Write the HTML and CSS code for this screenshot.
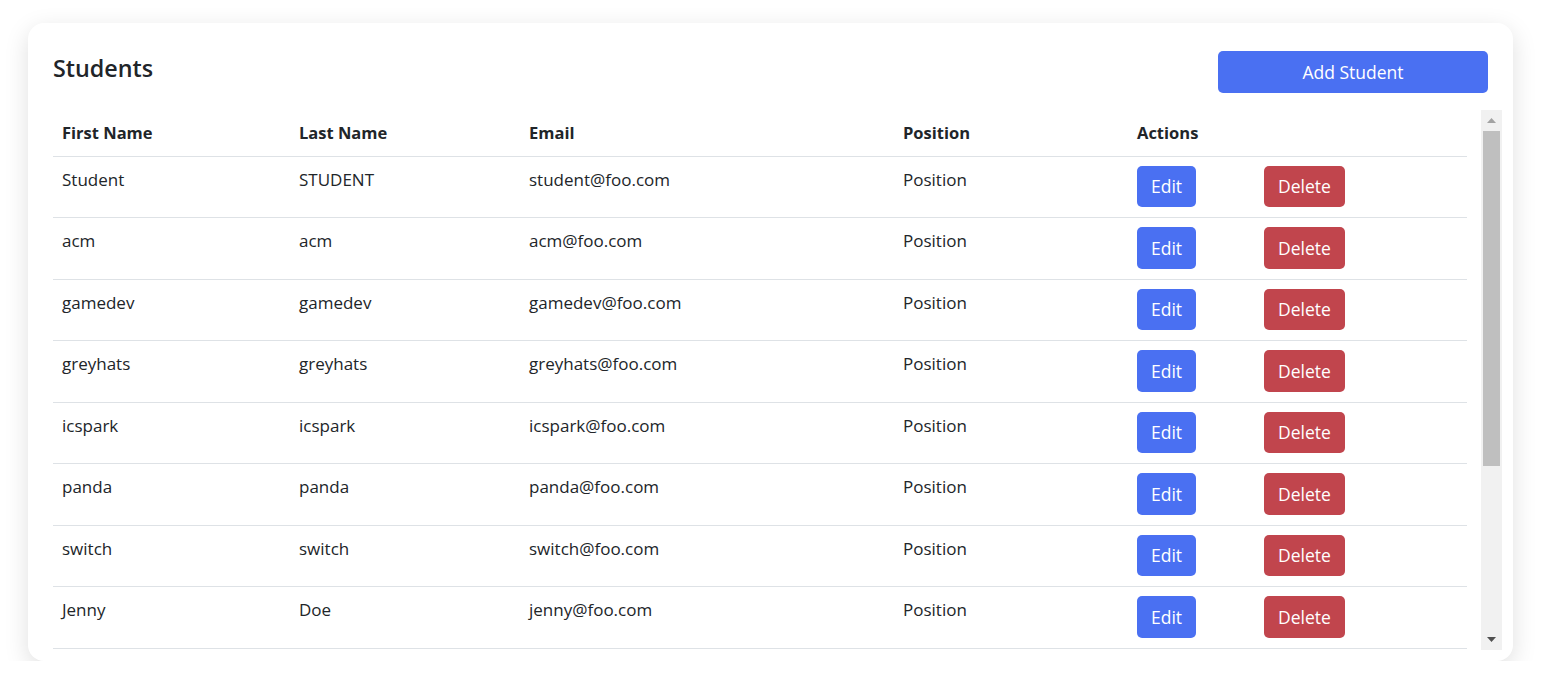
FILE: index.html
```html
<!DOCTYPE html>
<html lang="en">
<head>
<meta charset="utf-8">
<title>Students</title>
<link rel="stylesheet" href="styles.css">
</head>
<body>
<main class="page">
  <section class="card">
    <header class="card-head">
      <h2 class="title">Students</h2>
      <button class="btn btn-primary btn-add">Add Student</button>
    </header>
    <div class="table-wrap">
      <div class="table-scroll">
        <table class="table">
          <colgroup>
            <col class="c-first"><col class="c-last"><col class="c-email"><col class="c-pos"><col class="c-edit"><col class="c-del">
          </colgroup>
          <thead>
            <tr><th>First Name</th><th>Last Name</th><th>Email</th><th>Position</th><th>Actions</th><th class="th-empty"></th></tr>
          </thead>
          <tbody>
            <tr><td>Student</td><td>STUDENT</td><td>student@foo.com</td><td>Position</td><td><button class="btn btn-primary btn-sm">Edit</button></td><td><button class="btn btn-danger btn-sm">Delete</button></td></tr>
            <tr><td>acm</td><td>acm</td><td>acm@foo.com</td><td>Position</td><td><button class="btn btn-primary btn-sm">Edit</button></td><td><button class="btn btn-danger btn-sm">Delete</button></td></tr>
            <tr><td>gamedev</td><td>gamedev</td><td>gamedev@foo.com</td><td>Position</td><td><button class="btn btn-primary btn-sm">Edit</button></td><td><button class="btn btn-danger btn-sm">Delete</button></td></tr>
            <tr><td>greyhats</td><td>greyhats</td><td>greyhats@foo.com</td><td>Position</td><td><button class="btn btn-primary btn-sm">Edit</button></td><td><button class="btn btn-danger btn-sm">Delete</button></td></tr>
            <tr><td>icspark</td><td>icspark</td><td>icspark@foo.com</td><td>Position</td><td><button class="btn btn-primary btn-sm">Edit</button></td><td><button class="btn btn-danger btn-sm">Delete</button></td></tr>
            <tr><td>panda</td><td>panda</td><td>panda@foo.com</td><td>Position</td><td><button class="btn btn-primary btn-sm">Edit</button></td><td><button class="btn btn-danger btn-sm">Delete</button></td></tr>
            <tr><td>switch</td><td>switch</td><td>switch@foo.com</td><td>Position</td><td><button class="btn btn-primary btn-sm">Edit</button></td><td><button class="btn btn-danger btn-sm">Delete</button></td></tr>
            <tr><td>Jenny</td><td>Doe</td><td>jenny@foo.com</td><td>Position</td><td><button class="btn btn-primary btn-sm">Edit</button></td><td><button class="btn btn-danger btn-sm">Delete</button></td></tr>
          </tbody>
        </table>
      </div>
      <div class="scrollbar" aria-hidden="true">
        <div class="sb-btn">
          <svg width="9" height="5" viewBox="0 0 9 5"><path d="M0 5h9L4.5 0z" fill="#a3a3a3"/></svg>
        </div>
        <div class="sb-thumb"></div>
        <div class="sb-space"></div>
        <div class="sb-btn">
          <svg width="9" height="5" viewBox="0 0 9 5"><path d="M0 0h9L4.5 5z" fill="#505050"/></svg>
        </div>
      </div>
    </div>
  </section>
</main>
</body>
</html>
```

FILE: styles.css
```css
* { box-sizing: border-box; }

html, body {
  margin: 0;
  padding: 0;
  background: #ffffff;
}

body {
  font-family: "Open Sans", "Noto Sans", sans-serif;
  font-size: 17px;
  line-height: 1.5;
  color: #212529;
}

.page {
  padding: 23px 32px 0 28px;
}

.card {
  background: #fff;
  border-radius: 16px;
  box-shadow: 0 7px 24px rgba(0, 0, 0, 0.13);
  padding: 28px 25px 11px 25px;
  height: 638px;
  display: flex;
  flex-direction: column;
}

.card-head {
  display: flex;
  justify-content: space-between;
  align-items: flex-start;
  margin-bottom: 17px;
}

.title {
  margin: 0;
  font-size: 23.3px;
  font-weight: 600;
  line-height: 34px;
  color: #212529;
}

.btn {
  font-family: inherit;
  border: none;
  border-radius: 5px;
  color: #fff;
  cursor: pointer;
}

.btn-primary { background: #4a70f2; }
.btn-danger { background: #c1454d; }

.btn-add {
  width: 270px;
  height: 42px;
  font-size: 17.5px;
}

.btn-sm {
  height: 41.5px;
  font-size: 17.5px;
  padding: 0 14px;
}

.table-wrap {
  display: flex;
  height: 540px;
  margin-right: -14px;
}

.table-scroll {
  flex: 1;
  overflow: hidden;
  padding-right: 14px;
}

.scrollbar {
  width: 21px;
  flex: none;
  background: #f1f1f1;
  display: flex;
  flex-direction: column;
}

.sb-btn {
  height: 21px;
  flex: none;
  display: flex;
  align-items: center;
  justify-content: center;
}

.sb-thumb {
  height: 335px;
  flex: none;
  margin: 0 2px;
  background: #bfbfbf;
}

.sb-space { flex: 1; }

.table {
  width: 100%;
  border-collapse: collapse;
  table-layout: fixed;
}

.c-first { width: 237px; }
.c-last { width: 230px; }
.c-email { width: 374px; }
.c-pos { width: 234px; }
.c-edit { width: 127px; }
.c-del { width: auto; }

.table th {
  text-align: left;
  font-size: 16.5px;
  font-weight: 700;
  padding: 10.5px 9px 11px 9px;
  border-bottom: 1px solid #dee2e6;
  line-height: 24px;
}

.table td {
  vertical-align: top;
  padding: 9px 9px 10px 9px;
  border-bottom: 1px solid #dee2e6;
  line-height: 24px;
}

.table td:nth-child(-n+4) {
  padding-top: 11px;
}
```
